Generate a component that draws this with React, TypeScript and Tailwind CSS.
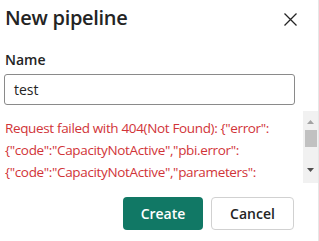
// Fake classic scrollbar beside the error message
function ScrollBar() {
  return (
    <div className="flex w-[15px] shrink-0 flex-col items-center bg-[#f1f1f1]">
      <svg width="7" height="4" viewBox="0 0 7 4" className="mt-[9px]">
        <path d="M0 4 L3.5 0 L7 4 Z" fill="#a3a3a3" />
      </svg>
      <div className="mt-[6px] h-[17px] w-[12px] bg-[#c1c1c1]" />
      <svg width="7" height="4" viewBox="0 0 7 4" className="mt-auto mb-[11px]">
        <path d="M0 0 L3.5 4 L7 0 Z" fill="#505050" />
      </svg>
    </div>
  );
}

export default function App() {
  return (
    <div
      className="flex h-[241px] w-[319px] flex-col overflow-hidden border-r border-[#e6e6e6] bg-white text-[#242424]"
      style={{ fontFamily: '"Open Sans", "Noto Sans", sans-serif' }}
    >
      {/* Header */}
      <div className="flex items-start justify-between pl-[5px] pr-[21px] pt-[4px]">
        <h1 className="text-[20px] font-semibold leading-[28px] tracking-[-0.3px]">New pipeline</h1>
        <button className="mt-[9px]">
          <svg width="13" height="13" viewBox="0 0 13 13" fill="none" stroke="#242424" strokeWidth="1.3">
            <path d="M0.5 0.5 L12.5 12.5 M12.5 0.5 L0.5 12.5" />
          </svg>
        </button>
      </div>

      {/* Name field */}
      <label className="mt-[18px] pl-[5px] text-[14px] font-semibold leading-[20px]">Name</label>
      <div className="ml-[4px] mt-[4px] flex h-[31px] w-[291px] items-center rounded-[3px] border border-[#8a8a8a] px-[9px] text-[14px]">
        test
      </div>

      {/* Error message */}
      <div className="mt-[6px] flex h-[72px]">
        <div className="min-w-0 flex-1 overflow-hidden pl-[5px] pr-[8px] pt-[6px] text-[13.5px] leading-[22px] tracking-[-0.35px] text-[#d13438]">
          Request failed with 404(Not Found): {'{"error":'}
          <br />
          {'{"code":"CapacityNotActive","pbi.error":'}
          <br />
          {'{"code":"CapacityNotActive","parameters":'}
        </div>
        <ScrollBar />
      </div>

      {/* Actions */}
      <div className="mt-[14px] flex justify-end gap-[8px] pr-[24px]">
        <button className="h-[33px] w-[80px] rounded-[4px] bg-[#117865] text-[14px] font-semibold text-white">
          Create
        </button>
        <button className="h-[33px] w-[83px] rounded-[4px] border border-[#d1d1d1] bg-white text-[14px] font-semibold text-[#242424]">
          Cancel
        </button>
      </div>
    </div>
  );
}
